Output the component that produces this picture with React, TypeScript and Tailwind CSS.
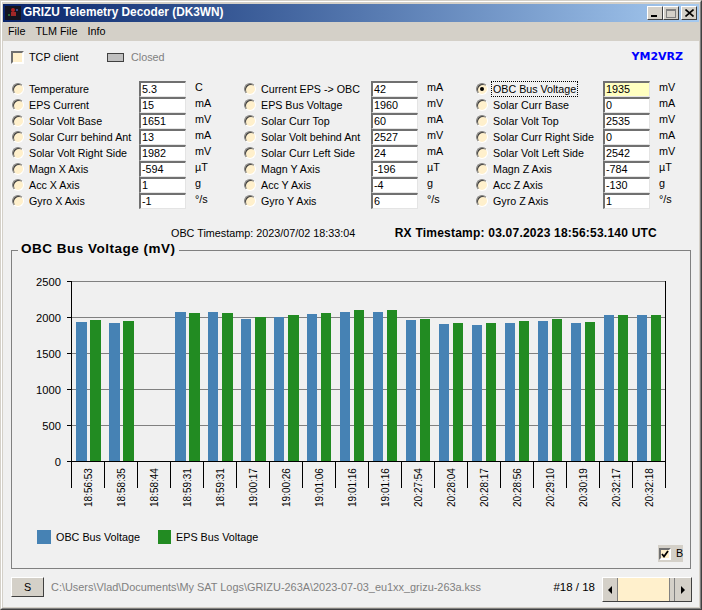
import type { ReactNode } from 'react';

const rows = [
  [
    ['Temperature', '5.3', 'C'],
    ['EPS Current', '15', 'mA'],
    ['Solar Volt Base', '1651', 'mV'],
    ['Solar Curr behind Ant', '13', 'mA'],
    ['Solar Volt Right Side', '1982', 'mV'],
    ['Magn X Axis', '-594', 'µT'],
    ['Acc X Axis', '1', 'g'],
    ['Gyro X Axis', '-1', '°/s'],
  ],
  [
    ['Current EPS -> OBC', '42', 'mA'],
    ['EPS Bus Voltage', '1960', 'mV'],
    ['Solar Curr Top', '60', 'mA'],
    ['Solar Volt behind Ant', '2527', 'mV'],
    ['Solar Curr Left Side', '24', 'mA'],
    ['Magn Y Axis', '-196', 'µT'],
    ['Acc Y Axis', '-4', 'g'],
    ['Gyro Y Axis', '6', '°/s'],
  ],
  [
    ['OBC Bus Voltage', '1935', 'mV'],
    ['Solar Curr Base', '0', 'mA'],
    ['Solar Volt Top', '2535', 'mV'],
    ['Solar Curr Right Side', '0', 'mA'],
    ['Solar Volt Left Side', '2542', 'mV'],
    ['Magn Z Axis', '-784', 'µT'],
    ['Acc Z Axis', '-130', 'g'],
    ['Gyro Z Axis', '1', '°/s'],
  ],
];

// bar tops in px, read off the chart (bottom of the plot is y=461)
const blueTops = [322, 323, 461, 312, 312, 319, 317, 314, 312, 312, 320, 324, 325, 323, 321, 323, 315, 315];
const greenTops = [320, 321, 461, 313, 313, 317, 315, 313, 310, 310, 319, 323, 323, 321, 319, 322, 315, 315];
const times = [
  '18:56:53', '18:58:35', '18:58:44', '18:59:31', '18:59:31', '19:00:17', '19:00:26', '19:01:06', '19:01:16',
  '19:01:16', '20:27:54', '20:28:04', '20:28:17', '20:28:56', '20:29:10', '20:30:19', '20:32:17', '20:32:18',
];
const yTicks = [
  [2500, 281],
  [2000, 317],
  [1500, 353],
  [1000, 389],
  [500, 425],
  [0, 461],
];

function Radio({ checked }: { checked?: boolean }) {
  return (
    <span className="flex h-3 w-3 shrink-0 items-center justify-center rounded-full border border-t-[#808080] border-l-[#808080] border-r-white border-b-white bg-[#fff0cc] shadow-[inset_1px_1px_0_#404040]">
      {checked && <span className="h-1 w-1 rounded-full bg-black" />}
    </span>
  );
}

function Row({ label, value, unit, active }: { label: string; value: string; unit: string; active?: boolean }) {
  return (
    <div className="flex h-4 items-center">
      <Radio checked={active} />
      <div className="ml-[5px] w-[110px] shrink-0 text-[10.7px]">
        <span className={active ? 'outline outline-1 outline-offset-1 outline-dotted outline-black' : ''}>{label}</span>
      </div>
      <div
        className={
          'flex h-4 w-[47px] shrink-0 items-end border-t-2 border-l-2 border-r border-b border-t-[#707070] border-l-[#707070] border-r-[#e4e4e4] border-b-[#e4e4e4] pl-[1px] leading-[13px] ' +
          (active ? 'bg-[#ffffc0]' : 'bg-white')
        }
      >
        {value}
      </div>
      <div className="ml-[9px] -mt-[3px]">{unit}</div>
    </div>
  );
}

function Chart() {
  return (
    <svg viewBox="12 251 677 317" className="block h-[317px] w-[677px]" fontSize="10.8" fill="#000">
      {yTicks.map(([v, y]) => (
        <g key={v}>
          <line x1="71" x2="665" y1={y + 0.5} y2={y + 0.5} stroke={v === 0 ? '#000' : '#808080'} />
          <line x1="67" x2="71" y1={y + 0.5} y2={y + 0.5} stroke="#000" />
          <text x="61" y={y + 4.5} textAnchor="end" fontSize="11.2">
            {v}
          </text>
        </g>
      ))}
      {blueTops.map((top, i) => (
        <g key={i}>
          <rect x={76 + 33 * i} y={top} width={i < 4 ? 11 : 10} height={461 - top} fill="#4682b4" />
          <rect x={90 + 33 * i} y={greenTops[i]} width={i < 7 ? 11 : 10} height={461 - greenTops[i]} fill="#228b22" />
        </g>
      ))}
      <line x1="71.5" x2="71.5" y1="281" y2="488" stroke="#000" />
      <line x1="665.5" x2="665.5" y1="281" y2="488" stroke="#000" />
      {times.map((t, i) => (
        <g key={i}>
          {i > 0 && <line x1={71.5 + 33 * i} x2={71.5 + 33 * i} y1="461" y2="488" stroke="#000" />}
          <text transform={`translate(${92 + 33 * i} 507) rotate(-90)`} fontSize="10">
            {t}
          </text>
        </g>
      ))}
      <rect x="37" y="530" width="14" height="14" fill="#4682b4" />
      <text x="56" y="541">
        OBC Bus Voltage
      </text>
      <rect x="158" y="530" width="13" height="14" fill="#228b22" />
      <text x="176" y="541">
        EPS Bus Voltage
      </text>
    </svg>
  );
}

function WinButton({ children }: { children: ReactNode }) {
  return (
    <div className="flex h-[14px] w-4 items-center justify-center border border-t-white border-l-white border-r-[#404040] border-b-[#404040] bg-[#d4d0c8]">
      {children}
    </div>
  );
}

export default function App() {
  return (
    <div className="h-[610px] w-[702px] border border-t-[#d4d0c8] border-l-[#d4d0c8] border-r-[#404040] border-b-[#404040] font-['Liberation_Sans',sans-serif] text-[10.8px] text-black">
      <div className="flex h-[608px] w-[700px] flex-col border border-t-white border-l-white border-r-[#808080] border-b-[#808080] bg-[#d4d0c8] px-[1px] pt-[2px] pb-[1px]">
        {/* title bar */}
        <div className="flex h-[18px] shrink-0 items-center bg-gradient-to-r from-[#0a246a] to-[#a6caf0] pl-[2px] pr-[2px]">
          <svg width="16" height="14" viewBox="0 0 16 14" className="shrink-0">
            <rect width="16" height="14" fill="#141420" />
            <circle cx="8" cy="4" r="2" fill="#b02020" />
            <rect x="6" y="6" width="5" height="4" fill="#a02828" />
            <rect x="3" y="8" width="2" height="2" fill="#2a6a3a" />
            <rect x="11" y="3" width="2" height="2" fill="#3a4a8a" />
          </svg>
          <span className="ml-[2px] text-[11.85px] font-bold text-white">GRIZU Telemetry Decoder (DK3WN)</span>
          <div className="ml-auto flex items-center">
            <WinButton>
              <span className="mt-[6px] mr-[2px] h-[2px] w-[6px] bg-black" />
            </WinButton>
            <WinButton>
              <span className="h-[9px] w-[10px] border border-t-2 border-[#808080]" />
            </WinButton>
            <div className="ml-[2px]">
              <WinButton>
                <svg width="9" height="8" viewBox="0 0 9 8">
                  <path d="M0.5 0.5L8.5 7.5M8.5 0.5L0.5 7.5" stroke="#000" strokeWidth="1.6" />
                </svg>
              </WinButton>
            </div>
          </div>
        </div>

        {/* menu */}
        <div className="flex h-[19px] shrink-0 items-center gap-[10px] pl-[5px]">
          <span>File</span>
          <span>TLM File</span>
          <span>Info</span>
        </div>

        {/* client area */}
        <div className="flex min-h-0 flex-1 flex-col bg-[#f0f0f0] pl-[8px] pr-[7px]">
          <div className="mt-[10px] flex h-[13px] items-center">
            <span className="h-[13px] w-[13px] shrink-0 border-2 border-t-[#707070] border-l-[#707070] border-r-white border-b-white bg-[#fff0cc]" />
            <span className="ml-[5px] w-[78px] shrink-0">TCP client</span>
            <span className="h-[9px] w-[17px] shrink-0 border border-[#404040] bg-[#c0c0c0]" />
            <span className="ml-[7px] text-[#808080]">Closed</span>
            <span className="ml-auto mr-[9px] font-['DejaVu_Sans',sans-serif] text-[11px] font-bold text-[#0000ff]">
              YM2VRZ
            </span>
          </div>

          <div className="mt-[17px] ml-[1px] grid grid-cols-[232px_232px_232px]">
            {rows.map((col, c) => (
              <div key={c}>
                {col.map(([label, value, unit], r) => (
                  <Row key={r} label={label} value={value} unit={unit} active={c === 2 && r === 0} />
                ))}
              </div>
            ))}
          </div>

          <div className="mt-[16px] flex h-4 items-center">
            <span className="ml-[160px]">OBC Timestamp: 2023/07/02 18:33:04</span>
            <span className="ml-auto mr-[35px] text-[12px] font-bold tracking-[0.22px]">
              RX Timestamp: 03.07.2023 18:56:53.140 UTC
            </span>
          </div>

          {/* chart group */}
          <div className="relative mt-[9px] h-[319px] w-[680px] border border-[#808080]">
            <div className="absolute -top-[10px] left-[6px] bg-[#f0f0f0] px-[3px] text-[13.5px] leading-[16px] font-bold tracking-[0.5px]">
              OBC Bus Voltage (mV)
            </div>
            <Chart />
            <div className="absolute top-[294px] left-[646px] flex h-[17px] w-[25px] items-center bg-[#d4d0c8] pl-[1px]">
              <span className="flex h-3 w-3 items-center justify-center border-2 border-t-[#707070] border-l-[#707070] border-r-white border-b-white bg-[#fff0cc]">
                <svg width="8" height="8" viewBox="0 0 8 8">
                  <path d="M1 4L3 6.5L7 1" fill="none" stroke="#000" strokeWidth="1.8" />
                </svg>
              </span>
              <span className="ml-[5px]">B</span>
            </div>
          </div>

          {/* bottom bar */}
          <div className="mt-[8px] flex h-[25px] items-start">
            <button className="h-[20px] w-[33px] border border-t-white border-l-white border-r-[#404040] border-b-[#404040] bg-[#d4d0c8]">
              S
            </button>
            <span className="ml-[7px] mt-[2px] text-[10.92px] text-[#808080]">
              C:\Users\Vlad\Documents\My SAT Logs\GRIZU-263A\2023-07-03_eu1xx_grizu-263a.kss
            </span>
            <span className="ml-auto mt-[2px] text-[11.5px]">#18 / 18</span>
            <div className="ml-[7px] flex h-[25px] w-[90px] border border-t-white border-l-white border-b-[#404040] border-r-[#404040]">
              <div className="flex w-[15px] items-center justify-center border-r border-r-[#808080] bg-[#d4d0c8]">
                <span className="h-0 w-0 border-y-[4px] border-r-[4px] border-y-transparent border-r-black" />
              </div>
              <div className="flex-1 bg-[#fff0cc]" />
              <div className="w-[6px] border-x border-x-[#808080] bg-[#d4d0c8]" />
              <div className="flex w-[16px] items-center justify-center bg-[#d4d0c8]">
                <span className="h-0 w-0 border-y-[4px] border-l-[4px] border-y-transparent border-l-black" />
              </div>
            </div>
          </div>
        </div>
      </div>
    </div>
  );
}
